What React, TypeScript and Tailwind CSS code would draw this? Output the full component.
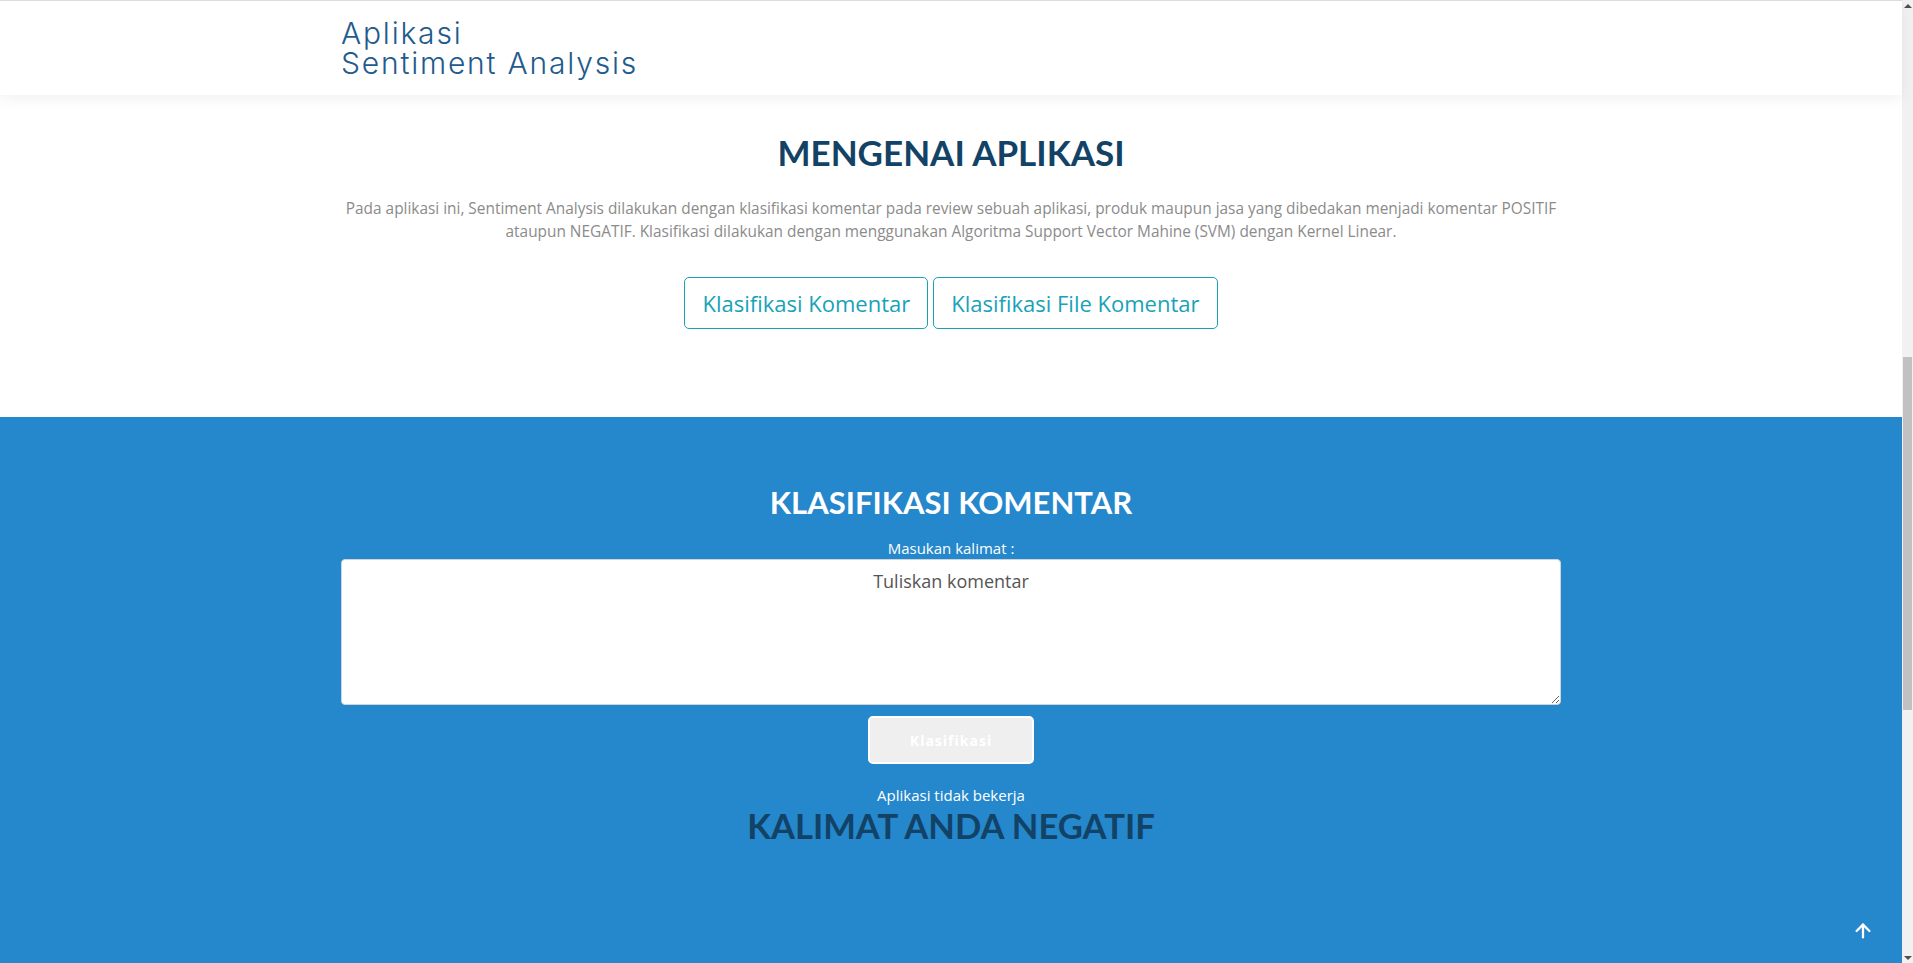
import React from "react";
import { ArrowUp } from "lucide-react";

// Header brand
const Header = () => (
  <header className="h-[95px] shrink-0 bg-white border-t border-[#dadce0] shadow-[0_4px_14px_rgba(0,0,0,0.06)] relative z-10">
    <div className="max-w-[1220px] mx-auto h-full flex items-center">
      <div className="font-['Inter',sans-serif] font-light text-[30px] leading-[30px] text-[#1f5b8c] tracking-[1.8px]">
        <div>Aplikasi</div>
        <div>Sentiment Analysis</div>
      </div>
    </div>
  </header>
);

const AboutSection = () => (
  <section className="h-[322px] shrink-0 bg-white pt-[37px]">
    <div className="max-w-[1220px] mx-auto flex flex-col items-center text-center">
      <h2 className="font-['Lato',sans-serif] font-bold text-[35px] leading-[40px] text-[#124265]">
        MENGENAI APLIKASI
      </h2>
      <p className="mt-[25px] font-['Open_Sans',sans-serif] text-[15.4px] leading-[23px] text-[#8b8b8b]">
        Pada aplikasi ini, Sentiment Analysis dilakukan dengan klasifikasi komentar pada review sebuah aplikasi, produk
        maupun jasa yang dibedakan menjadi komentar POSITIF ataupun NEGATIF. Klasifikasi dilakukan dengan menggunakan
        Algoritma Support Vector Mahine (SVM) dengan Kernel Linear.
      </p>
      <div className="mt-[34px] flex gap-[5px]">
        <button className="h-[52px] px-[17px] border border-[#17a2b8] rounded-[5px] font-['Open_Sans',sans-serif] text-[22px] text-[#17a2b8]">
          Klasifikasi Komentar
        </button>
        <button className="h-[52px] px-[17px] border border-[#17a2b8] rounded-[5px] font-['Open_Sans',sans-serif] text-[22px] text-[#17a2b8]">
          Klasifikasi File Komentar
        </button>
      </div>
    </div>
  </section>
);

const ClassifySection = () => (
  <section className="flex-1 bg-[#2587cc] pt-[66px] relative">
    <div className="max-w-[1220px] mx-auto flex flex-col items-center text-center">
      <h2 className="font-['Lato',sans-serif] font-bold text-[31px] leading-[38px] text-white">
        KLASIFIKASI KOMENTAR
      </h2>
      <label className="mt-[16px] font-['Open_Sans',sans-serif] text-[15px] leading-[22px] text-white">
        Masukan kalimat :
      </label>
      <textarea
        className="w-full h-[146px] bg-white rounded-[4px] border border-[#ced4da] px-3 py-[8px] text-center font-['Open_Sans',sans-serif] text-[18px] leading-[27px] text-[#555] placeholder:text-[#555] outline-none"
        placeholder="Tuliskan komentar"
      />
      <button className="mt-[11px] w-[166px] h-[48px] bg-[#efefef] border-2 border-white rounded-[5px] font-['Open_Sans',sans-serif] font-bold text-[14px] tracking-[1px] text-white">
        Klasifikasi
      </button>
      <p className="mt-[20px] font-['Open_Sans',sans-serif] text-[15px] leading-[22px] text-white">
        Aplikasi tidak bekerja
      </p>
      <h1 className="font-['Lato',sans-serif] font-bold text-[34.6px] leading-[40px] text-[#124265]">
        KALIMAT ANDA NEGATIF
      </h1>
    </div>
    <button className="absolute right-[19px] bottom-[12px] w-[40px] h-[40px] flex items-center justify-center text-white">
      <ArrowUp size={22} strokeWidth={2.5} />
    </button>
  </section>
);

const Scrollbar = () => (
  <div className="w-[11px] shrink-0 bg-[#f1f1f1] flex flex-col">
    <div className="h-[11px] flex items-center justify-center">
      <div className="w-0 h-0 border-l-[4px] border-r-[4px] border-b-[4px] border-l-transparent border-r-transparent border-b-[#505050]" />
    </div>
    <div className="flex-1 pt-[346px] px-[1px]">
      <div className="h-[353px] bg-[#c1c1c1]" />
    </div>
    <div className="h-[11px] flex items-center justify-center">
      <div className="w-0 h-0 border-l-[4px] border-r-[4px] border-t-[4px] border-l-transparent border-r-transparent border-t-[#505050]" />
    </div>
  </div>
);

export default function App() {
  return (
    <div className="h-screen w-full flex overflow-hidden bg-white">
      <div className="flex-1 flex flex-col min-w-0">
        <Header />
        <AboutSection />
        <ClassifySection />
      </div>
      <Scrollbar />
    </div>
  );
}
